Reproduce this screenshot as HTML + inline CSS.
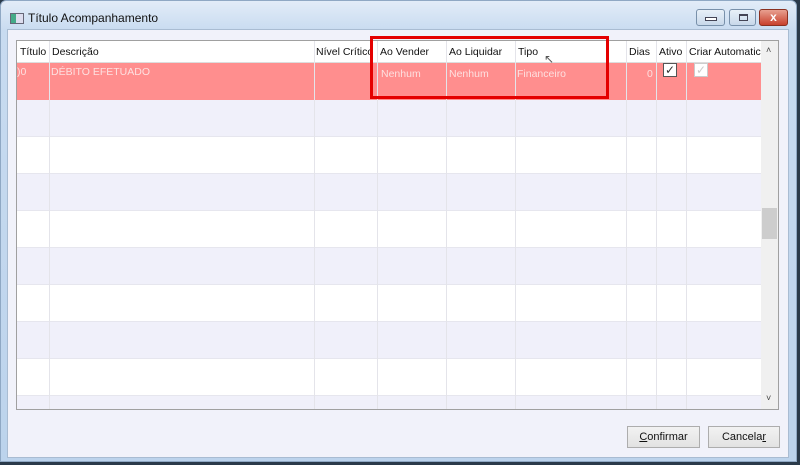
<!DOCTYPE html><html><head><style>
*{margin:0;padding:0;box-sizing:border-box}
body{width:800px;height:465px;overflow:hidden;background:#2a3a4a;font-family:"Liberation Sans",sans-serif;font-size:10.5px;position:relative}
.frame{position:absolute;left:0;top:0;width:797px;height:462px;background:linear-gradient(#e2ecf8,#c8dbf0 30px,#bcd3ec);border:1px solid #8fa8c4;border-radius:6px 6px 0 0}
.client{position:absolute;left:6px;top:28px;width:782px;height:429px;background:#f1f2fa;border:1px solid #a9bcd2}
.title{position:absolute;left:27px;top:10px;font-size:12px;color:#111}
.ico{position:absolute;left:9px;top:12px;width:14px;height:11px;border:1px solid #667;background:linear-gradient(90deg,#4a8 0 5px,#dde 5px)}
.wb{position:absolute;top:8px;height:17px;border:1px solid #7890aa;border-radius:3px;background:linear-gradient(#e8f0f8,#c8d8ea)}
.grid{position:absolute;left:16px;top:40px;width:763px;height:370px;border:1px solid #a0a0a0;background:#fff;overflow:hidden}
.hdr{position:absolute;left:0;top:0;width:745px;height:22px;background:#fff;border-bottom:1px solid #ddd}
.h{position:absolute;top:5px;color:#111;white-space:nowrap}
.row{position:absolute;left:0;width:745px;height:37px;border-bottom:1px solid #e6e6ee}
.vl{position:absolute;top:0;width:1px;height:370px;background:#e4e4ea}
.r{position:absolute;top:25px;color:#fde0e0}
.sb{position:absolute;right:0;top:0;width:17px;height:368px;background:#f0f0f0}
.btn{position:absolute;top:425px;height:22px;border:1px solid #adadad;background:linear-gradient(#f2f2f2,#e2e2e2);text-align:center;line-height:20px;font-size:11px;color:#111}
.cb{position:absolute;top:22px;width:14px;height:14px;border:1px solid #555;background:#fff;font-size:12px;line-height:12px;text-align:center;color:#333}
</style></head><body>
<div class="frame">
<div class="ico"></div><div class="title">Título Acompanhamento</div>
<div class="wb" style="left:695px;width:29px"><div style="position:absolute;left:8px;top:7px;width:12px;height:4px;border:1px solid #445;background:#fff"></div></div>
<div class="wb" style="left:728px;width:27px"><div style="position:absolute;left:9px;top:4px;width:9px;height:7px;border:1px solid #445;border-top-width:2px"></div></div>
<div class="wb" style="left:758px;width:29px;background:linear-gradient(#e8a090,#c8402c);border-color:#8a3020;color:#fff;font-weight:bold;text-align:center;font-size:12px;line-height:15px">x</div>
<div class="client">
<div class="btn" style="left:619px;top:396px;width:73px"><u>C</u>onfirmar</div>
<div class="btn" style="left:700px;top:396px;width:72px">Cancela<u>r</u></div>
</div>
</div>
<div class="grid">
<div class="row" style="top:22px;background:#ff8e8e;border:none"></div>
<div class="row" style="top:59px;background:#f0f0fa"></div>
<div class="row" style="top:96px"></div>
<div class="row" style="top:133px;background:#f0f0fa"></div>
<div class="row" style="top:170px"></div>
<div class="row" style="top:207px;background:#f0f0fa"></div>
<div class="row" style="top:244px"></div>
<div class="row" style="top:281px;background:#f0f0fa"></div>
<div class="row" style="top:318px"></div>
<div class="row" style="top:355px;background:#f0f0fa"></div>
<div class="vl" style="left:32px"></div><div class="vl" style="left:297px"></div><div class="vl" style="left:360px"></div><div class="vl" style="left:429px"></div><div class="vl" style="left:498px"></div><div class="vl" style="left:609px"></div><div class="vl" style="left:639px"></div><div class="vl" style="left:669px"></div>
<div class="hdr"></div>
<div class="vl" style="left:32px;height:22px"></div><div class="vl" style="left:297px;height:22px"></div><div class="vl" style="left:360px;height:22px"></div><div class="vl" style="left:429px;height:22px"></div><div class="vl" style="left:498px;height:22px"></div><div class="vl" style="left:609px;height:22px"></div><div class="vl" style="left:639px;height:22px"></div><div class="vl" style="left:669px;height:22px"></div>
<div class="h" style="left:3px">Título</div><div class="h" style="left:35px">Descrição</div><div class="h" style="left:299px">Nível Crítico</div><div class="h" style="left:363px">Ao Vender</div><div class="h" style="left:432px">Ao Liquidar</div><div class="h" style="left:501px">Tipo</div><div class="h" style="left:612px">Dias</div><div class="h" style="left:642px">Ativo</div><div class="h" style="left:672px">Criar Automatic.</div>
<div class="r" style="left:0">)0</div><div class="r" style="left:34px">DÉBITO EFETUADO</div><div class="r" style="left:364px;top:27px">Nenhum</div><div class="r" style="left:432px;top:27px">Nenhum</div><div class="r" style="left:500px;top:27px">Financeiro</div><div class="r" style="left:630px;top:27px">0</div>
<div class="cb" style="left:646px">✓</div><div class="cb" style="left:677px;border-color:#ccc;color:#ccc">✓</div>
<div class="sb"><div style="position:absolute;left:5px;top:4px;font-size:9px;color:#444">˄</div><div style="position:absolute;left:1px;top:167px;width:15px;height:31px;background:#cdcdcd"></div><div style="position:absolute;left:5px;top:352px;font-size:9px;color:#444">˅</div></div>
</div>
<div style="position:absolute;left:370px;top:36px;width:239px;height:63px;border:3px solid #e40000"></div>
<div style="position:absolute;left:544px;top:52px;font-size:12px;color:#555">↖</div>
</body></html>
